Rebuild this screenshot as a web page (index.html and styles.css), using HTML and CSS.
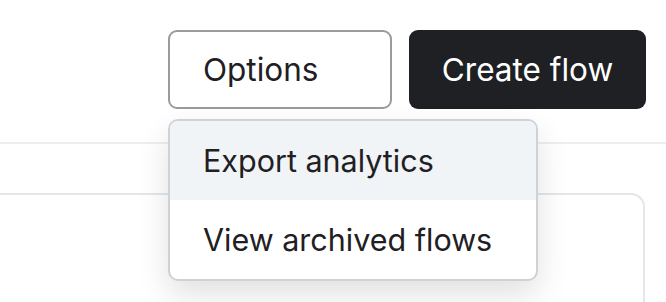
FILE: index.html
```html
<!DOCTYPE html>
<html lang="en">
<head>
<meta charset="utf-8">
<link rel="stylesheet" href="styles.css">
</head>
<body>
  <header class="header">
    <div class="dropdown">
      <button class="btn btn-outline">Options</button>
      <div class="menu">
        <div class="menu-item active">Export analytics</div>
        <div class="menu-item">View archived flows</div>
      </div>
    </div>
    <button class="btn btn-dark">Create flow</button>
  </header>
  <main class="content">
    <div class="card"></div>
  </main>
</body>
</html>
```

FILE: styles.css
```css
* { box-sizing: border-box; }
html, body { margin: 0; background: #fff; overflow: hidden; }
body {
  font-family: Inter, "Liberation Sans", sans-serif;
  color: #1f2023;
  width: 666px;
  height: 302px;
}
.header {
  display: flex;
  justify-content: flex-end;
  align-items: flex-start;
  gap: 17px;
  padding: 30px 20px 33px 0;
  border-bottom: 2px solid #eceef0;
}
.dropdown { position: relative; }
.btn {
  height: 79px;
  font-family: inherit;
  font-size: 31.5px;
  border-radius: 9px;
  cursor: pointer;
  letter-spacing: 0;
}
.btn-outline {
  width: 224px;
  background: #fff;
  border: 2px solid #9b9b9b;
  color: #1f2023;
  text-align: left;
  padding: 0 33px;
}
.btn-dark {
  width: 237px;
  background: #1f2023;
  border: none;
  color: #fff;
  text-align: center;
  padding: 0;
}
.menu {
  position: absolute;
  top: 89px;
  left: 0;
  width: 370px;
  background: #fff;
  border: 2px solid #cdd2d7;
  border-radius: 10px;
  overflow: hidden;
  box-shadow: 0 14px 32px rgba(0, 0, 0, 0.12);
  z-index: 2;
}
.menu-item {
  height: 79px;
  display: flex;
  align-items: center;
  padding: 0 33px;
  font-size: 30.5px;
  color: #1f2023;
}
.menu-item.active { background: #f1f4f6; }
.content { padding: 49px 21px 0 0; }
.card {
  margin-left: -20px;
  height: 109px;
  border: 2px solid #e3e6ea;
  border-bottom: none;
  border-radius: 14px 14px 0 0;
}
```
